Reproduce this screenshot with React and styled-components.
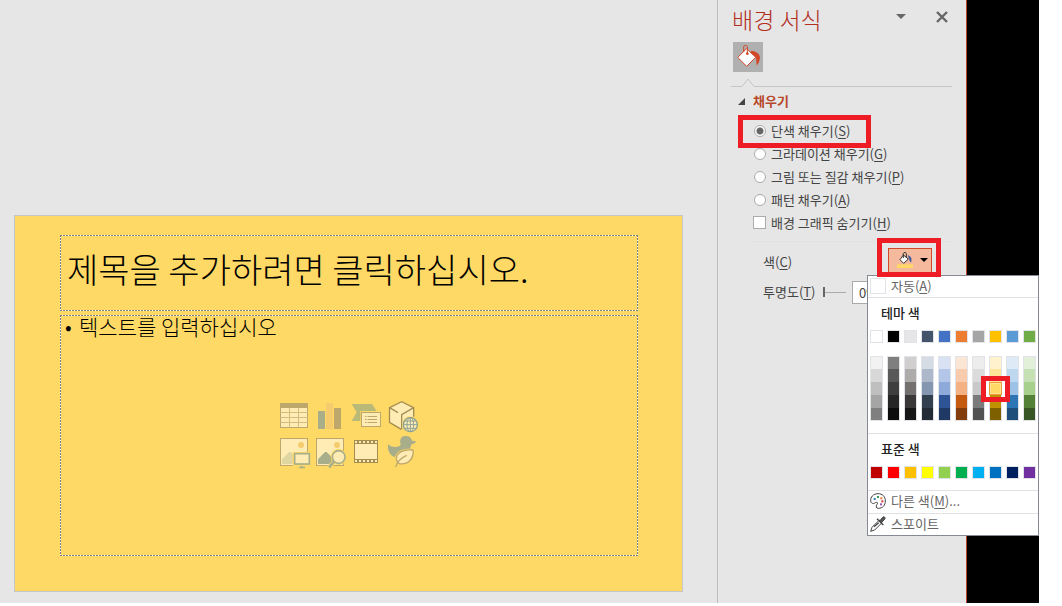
import { useState } from 'react'
import styled, { createGlobalStyle } from 'styled-components'

const themeColors = [
  { base: '#ffffff', shades: ['#f2f2f2', '#d8d8d8', '#bfbfbf', '#a5a5a5', '#7f7f7f'] },
  { base: '#000000', shades: ['#7f7f7f', '#595959', '#3f3f3f', '#262626', '#0c0c0c'] },
  { base: '#e7e6e6', shades: ['#d0cece', '#aeabab', '#757070', '#3a3838', '#171616'] },
  { base: '#44546a', shades: ['#d6dce4', '#adb9ca', '#8496b0', '#323f4f', '#222a35'] },
  { base: '#4472c4', shades: ['#d9e2f3', '#b4c6e7', '#8eaadb', '#2f5496', '#1f3864'] },
  { base: '#ed7d31', shades: ['#fbe5d5', '#f7cbac', '#f4b183', '#c55a11', '#833c0b'] },
  { base: '#a5a5a5', shades: ['#ededed', '#dbdbdb', '#c9c9c9', '#7b7b7b', '#525252'] },
  { base: '#ffc000', shades: ['#fff2cc', '#fee599', '#ffd965', '#bf9000', '#7f6000'] },
  { base: '#5b9bd5', shades: ['#deebf6', '#bdd7ee', '#9cc3e5', '#2e75b5', '#1e4e79'] },
  { base: '#70ad47', shades: ['#e2efd9', '#c5e0b3', '#a8d08d', '#538135', '#375623'] },
]

const standardColors = [
  '#c00000', '#ff0000', '#ffc000', '#ffff00', '#92d050',
  '#00b050', '#00b0f0', '#0070c0', '#002060', '#7030a0',
]

const fillTypes = [
  { id: 'solid', label: '단색 채우기', hotkey: 'S' },
  { id: 'gradient', label: '그라데이션 채우기', hotkey: 'G' },
  { id: 'picture', label: '그림 또는 질감 채우기', hotkey: 'P' },
  { id: 'pattern', label: '패턴 채우기', hotkey: 'A' },
]

function Hotkey({ letter }) {
  return <>(<u>{letter}</u>)</>
}

/* ---------- placeholder icons ---------- */

function TableIcon() {
  return (
    <PlaceholderSvg viewBox="0 0 108 108">
      <rect x="7.5" y="10.5" width="81" height="72" fill="#ffecb5" stroke="#bda76b" strokeWidth="3" />
      <rect x="6" y="9" width="84" height="15" fill="#bda76b" />
      <path d="M7 37.500H89M7 52.500H89M7 67.500H89M34.500 24V82M61.500 24V82" stroke="#d3bd7c" strokeWidth="3" fill="none" />
    </PlaceholderSvg>
  )
}

function ChartIcon() {
  return (
    <PlaceholderSvg viewBox="0 0 108 108">
      <rect x="12" y="33" width="21" height="54" fill="#a8ae8a" />
      <rect x="36" y="9" width="21" height="78" fill="#f5cc6d" />
      <rect x="60" y="24" width="21" height="63" fill="#bda76b" />
    </PlaceholderSvg>
  )
}

function SmartArtIcon() {
  return (
    <PlaceholderSvg viewBox="0 0 108 108">
      <path d="M5 12H66L82 37L66 63H5L20 37Z" fill="#b9b978" />
      <rect x="31" y="33" width="60" height="51" fill="#fed966" />
      <rect x="34.500" y="37.500" width="57" height="42" fill="#ffecb5" stroke="#bda76b" strokeWidth="3" />
      <path d="M45 49.500H50M53 49.500H81M45 58.500H50M53 58.500H81M45 67.500H50M53 67.500H81" stroke="#bda76b" strokeWidth="3" />
    </PlaceholderSvg>
  )
}

function ModelIcon() {
  return (
    <PlaceholderSvg viewBox="0 0 108 108">
      <path d="M10.500 23L47 5L83 23V66L46 88L10.500 67Z" fill="#ffecb5" />
      <path d="M46 88L10.500 67V23L47 5L83 23V50M10.500 23L36 38M83 23L47 44V88" fill="none" stroke="#a48d50" strokeWidth="4" />
      <circle cx="73" cy="74" r="25" fill="#fed966" />
      <circle cx="73" cy="74" r="21" fill="#ffecb5" stroke="#8fa393" strokeWidth="4" />
      <path d="M73 53V95M52 74H94M56 63H90M56 85H90" stroke="#8fa393" strokeWidth="3" />
      <ellipse cx="73" cy="74" rx="10" ry="21" fill="none" stroke="#8fa393" strokeWidth="3" />
    </PlaceholderSvg>
  )
}

function PictureIcon() {
  return (
    <PlaceholderSvg viewBox="0 0 108 108">
      <rect x="7.500" y="7.500" width="81" height="81" fill="#ffecb5" stroke="#bda76b" strokeWidth="3" />
      <circle cx="69" cy="27" r="9" fill="#f5cc6d" />
      <path d="M12 84V70L33 48H38L60 70V84Z" fill="#dfd6a2" />
      <path d="M44 48H99V90H83V97H56V90H44Z" fill="#fed966" />
      <rect x="50" y="53" width="44" height="31" fill="#ffecb5" stroke="#a8ae8a" strokeWidth="5" />
      <path d="M72 89V96M63 94.500H81" stroke="#a8ae8a" strokeWidth="4" />
    </PlaceholderSvg>
  )
}

function OnlinePictureIcon() {
  return (
    <PlaceholderSvg viewBox="0 0 108 108">
      <rect x="7.500" y="7.500" width="81" height="81" fill="#ffecb5" stroke="#bda76b" strokeWidth="3" />
      <circle cx="69" cy="27" r="9" fill="#f5cc6d" />
      <path d="M12 84V70L33 48H38L60 70V84Z" fill="#a8ae8a" />
      <circle cx="74" cy="63" r="24" fill="#fed966" />
      <path d="M60 78L45 94" stroke="#fed966" strokeWidth="13" />
      <path d="M60 77L45 94" stroke="#a8ae8a" strokeWidth="8" />
      <circle cx="74" cy="63" r="19" fill="#ffecb5" stroke="#a8ae8a" strokeWidth="5" />
    </PlaceholderSvg>
  )
}

function VideoIcon() {
  return (
    <PlaceholderSvg viewBox="0 0 108 108">
      <rect x="12" y="12" width="72" height="69" fill="#a48d50" />
      <rect x="15" y="24" width="66" height="45" fill="#ffecb5" />
      <path d="M15 18H81M15 75H81" stroke="#ffecb5" strokeWidth="6" strokeDasharray="6 6" />
    </PlaceholderSvg>
  )
}

function StockIcon() {
  return (
    <PlaceholderSvg viewBox="0 0 108 108">
      <path d="M6 24C13 33 27 35 39 31C47 28 43 23 42 16C43 4 50 -1 61 0C70 0 76 6 78 14L90 16C88 23 82 25 76 25C76 31 72 34 73 40C70 56 48 66 29 64C13 61 4 46 6 24Z" fill="#a8ae8a" />
      <path d="M84 39C58 36 33 42 27 62C26 70 28 77 34 83L24 94L34 95L41 87C72 91 89 69 84 39Z" fill="#fed966" />
      <path d="M81 42C58 40 37 46 32 61C30 71 33 79 40 83C66 87 85 67 81 42Z" fill="#ffecb5" stroke="#bda76b" strokeWidth="4" />
      <path d="M29 93C33 79 44 66 62 58" fill="none" stroke="#bda76b" strokeWidth="4" />
    </PlaceholderSvg>
  )
}

const contentButtons = [
  { label: '표 삽입', Icon: TableIcon },
  { label: '차트 삽입', Icon: ChartIcon },
  { label: 'SmartArt 그래픽 삽입', Icon: SmartArtIcon },
  { label: '3D 모델', Icon: ModelIcon },
  { label: '그림', Icon: PictureIcon },
  { label: '온라인 그림', Icon: OnlinePictureIcon },
  { label: '비디오 삽입', Icon: VideoIcon },
  { label: '아이콘 삽입', Icon: StockIcon },
]

/* ---------- pane icons ---------- */

function FillTabIcon() {
  return (
    <svg width="30" height="30" viewBox="0 0 90 90">
      <path d="M54 26C70 27 81 36 81 47C80 56 76 65 71 71L69 46L54 33Z" fill="#d24726" />
      <path d="M41 20L68 46L41 73L14 46Z" fill="#fff" stroke="#d24726" strokeWidth="3" />
      <path d="M32 28V14C32 9 43 9 43 14V34" fill="none" stroke="#d24726" strokeWidth="3" />
      <circle cx="43" cy="35" r="4" fill="#d24726" />
    </svg>
  )
}

function BucketIcon() {
  return (
    <svg width="16" height="16" viewBox="0 0 48 48">
      <path d="M32 10C43 12 46 21 42 32C37 29 36 20 32 10Z" fill="#44619d" />
      <path d="M19 9L34 21L20 34L9 23Z" fill="#fff" stroke="#333" strokeWidth="3" />
      <path d="M19 18V4C21 0 27 0 28 5V15" fill="none" stroke="#333" strokeWidth="3" />
      <rect x="0" y="37" width="48" height="11" fill="#ffd965" />
    </svg>
  )
}

function PaletteIcon() {
  return (
    <svg width="16" height="16" viewBox="0 0 48 48">
      <path d="M24 2C10 2 1 12 2 24C3 31 10 34 16 29C21 26 25 29 21 34C17 40 18 46 25 46C38 46 46 37 46 24C46 10 37 2 24 2Z" fill="#fff" stroke="#444" strokeWidth="3" />
      <rect x="11" y="15" width="6" height="6" fill="#3b7fc4" />
      <rect x="21" y="9" width="6" height="6" fill="#3a9a5b" />
      <rect x="31" y="13" width="6" height="6" fill="#e8762c" />
      <rect x="34" y="22" width="6" height="6" fill="#d13438" />
      <rect x="30" y="31" width="6" height="6" fill="#a04fb0" />
    </svg>
  )
}

function EyedropperIcon() {
  return (
    <svg width="16" height="16" viewBox="0 0 48 48">
      <path d="M2 46L6 34L28 12L36 20L14 42Z" fill="#fff" stroke="#444" strokeWidth="3" />
      <path d="M29 15L38 4C42 0 48 5 44 10L34 20Z" fill="#555" stroke="#444" strokeWidth="3" />
      <path d="M21 8L40 27M12 32L26 20" stroke="#444" strokeWidth="4" />
    </svg>
  )
}

function ColorMenu({ color, onPick }) {
  return (
    <Menu>
      <MenuItem>
        <AutoSwatch />
        <span>자동<Hotkey letter="A" /></span>
      </MenuItem>
      <MenuGroup>
        <MenuTitle>테마 색</MenuTitle>
        <SwatchRow>
          {themeColors.map(({ base }) => (
            <Swatch key={base} $color={base} aria-label={base} onClick={() => onPick(base)} />
          ))}
        </SwatchRow>
        <ShadeRow>
          {themeColors.map(({ base, shades }) => (
            <ShadeColumn key={base}>
              {shades.map((shade) => (
                <Shade
                  key={shade}
                  $color={shade}
                  $selected={shade === color}
                  aria-label={shade}
                  onClick={() => onPick(shade)}
                >
                  {shade === '#ffd965' && <SwatchMark />}
                </Shade>
              ))}
            </ShadeColumn>
          ))}
        </ShadeRow>
      </MenuGroup>
      <MenuGroup>
        <MenuTitle>표준 색</MenuTitle>
        <SwatchRow>
          {standardColors.map((c) => (
            <Swatch key={c} $color={c} aria-label={c} onClick={() => onPick(c)} />
          ))}
        </SwatchRow>
      </MenuGroup>
      <MenuItem $line>
        <PaletteIcon />
        <span>다른 색<Hotkey letter="M" />...</span>
      </MenuItem>
      <MenuItem $line>
        <EyedropperIcon />
        <span>스포이트</span>
      </MenuItem>
    </Menu>
  )
}

function FormatPane({ color, onPick }) {
  const [fill, setFill] = useState('solid')
  const [hideGraphics, setHideGraphics] = useState(false)
  const [transparency, setTransparency] = useState(0)

  return (
    <Pane>
      <PaneHeader>
        <h2>배경 서식</h2>
        <HeaderButton aria-label="작업창 옵션">
          <svg width="10" height="6" viewBox="0 0 10 6"><path d="M0 0H10L5 5Z" fill="#666" /></svg>
        </HeaderButton>
        <HeaderButton aria-label="닫기">
          <svg width="12" height="12" viewBox="0 0 12 12"><path d="M1 1L11 11M11 1L1 11" stroke="#666" strokeWidth="2.400" /></svg>
        </HeaderButton>
      </PaneHeader>

      <FillTab aria-label="채우기"><FillTabIcon /></FillTab>
      <TabLine>
        <svg width="14" height="9" viewBox="0 0 14 9"><path d="M0 8.500H1L7 1L13 8.500H14" fill="none" stroke="#c6c6c6" /></svg>
      </TabLine>

      <SectionTitle>
        <svg width="7" height="7" viewBox="0 0 7 7"><path d="M7 0V7H0Z" fill="#444" /></svg>
        채우기
      </SectionTitle>

      <Options>
        {fillTypes.map(({ id, label, hotkey }) => (
          <Option key={id}>
            <Radio name="fill" checked={fill === id} onChange={() => setFill(id)} />
            <span>{label}<Hotkey letter={hotkey} /></span>
            {id === 'solid' && <OptionMark />}
          </Option>
        ))}
        <Option>
          <Checkbox checked={hideGraphics} onChange={(e) => setHideGraphics(e.target.checked)} />
          <span>배경 그래픽 숨기기<Hotkey letter="H" /></span>
        </Option>
      </Options>

      <Settings>
        <SettingRow>
          <SettingLabel id="color-label">색<Hotkey letter="C" /></SettingLabel>
          <ColorPicker>
            <ColorButton aria-labelledby="color-label">
              <BucketIcon />
              <svg width="8" height="4" viewBox="0 0 8 4"><path d="M0 0H8L4 4Z" fill="#000" /></svg>
            </ColorButton>
            <ColorMenu color={color} onPick={onPick} />
            <ButtonMark />
          </ColorPicker>
        </SettingRow>
        <SettingRow>
          <SettingLabel as="label" htmlFor="transparency">투명도<Hotkey letter="T" /></SettingLabel>
          <Slider id="transparency" value={transparency} onChange={(e) => setTransparency(e.target.value)} />
          <Spin aria-label="투명도 값" value={`${transparency}%`} readOnly />
        </SettingRow>
      </Settings>
    </Pane>
  )
}

function App() {
  const [color, setColor] = useState('#ffd965')

  return (
    <>
      <GlobalStyle />
      <Screen>
        <Workspace>
          <Slide $color={color}>
            <TitleBox><h1>제목을 추가하려면 클릭하십시오.</h1></TitleBox>
            <ContentBox>
              <ul><li>텍스트를 입력하십시오</li></ul>
              <ContentGrid>
                {contentButtons.map(({ label, Icon }) => (
                  <ContentButton key={label} aria-label={label}><Icon /></ContentButton>
                ))}
              </ContentGrid>
            </ContentBox>
          </Slide>
        </Workspace>
        <FormatPane color={color} onPick={setColor} />
        <Desktop />
      </Screen>
    </>
  )
}
export default App

const GlobalStyle = createGlobalStyle`
  * {
    box-sizing: border-box;
  }
  body {
    margin: 0;
    background: #fff;
    color: #444;
    font: 13px/20px "Noto Sans CJK KR", sans-serif;
  }
  h1, h2, h3, ul {
    margin: 0;
    padding: 0;
    font-weight: 400;
  }
  button {
    padding: 0;
    border: 0;
    background: none;
    color: inherit;
    font: inherit;
  }
  input {
    margin: 0;
    font: inherit;
    color: inherit;
  }
  svg {
    display: block;
    flex: none;
  }
  u {
    text-underline-offset: 2px;
  }
`

const Screen = styled.div`
  display: flex;
  min-height: calc(100vh - 3px);
  margin: 0 23px 3px 0;
  background: #e6e6e6;
`

const Workspace = styled.main`
  flex: 1;
  min-width: 0;
  padding: 215px 34px 11px 14px;
`

const Slide = styled.section`
  display: flex;
  flex-direction: column;
  gap: 4px;
  aspect-ratio: 669 / 377;
  padding: 19px 44px 35px 45px;
  border: 1px solid #c6c6c6;
  background: ${(p) => p.$color};
`

/* two grey pixels, one white, all the way round */
const Placeholder = styled.div`
  background:
    repeating-linear-gradient(90deg, #7f7f7f 0 2px, #fff 2px 3px) top / 100% 1px no-repeat,
    repeating-linear-gradient(90deg, #7f7f7f 0 2px, #fff 2px 3px) bottom / 100% 1px no-repeat,
    repeating-linear-gradient(#7f7f7f 0 2px, #fff 2px 3px) left / 1px 100% no-repeat,
    repeating-linear-gradient(#7f7f7f 0 2px, #fff 2px 3px) right / 1px 100% no-repeat;
  color: #000;
`

const TitleBox = styled(Placeholder)`
  padding: 12px 7px 20px;
  h1 {
    font-size: 34px;
    line-height: 44px;
    font-weight: 300;
  }
`

const ContentBox = styled(Placeholder)`
  flex: 1;
  display: grid;
  grid-template-rows: 1fr auto 1fr;
  justify-items: center;
  padding-left: 2px;
  ul {
    justify-self: start;
    padding-left: 17px;
    font-size: 21px;
    line-height: 22px;
    font-weight: 300;
    list-style: none;
  }
  li::before {
    content: '•';
    display: inline-block;
    width: 14px;
    margin-left: -14px;
  }
`

const ContentGrid = styled.div`
  display: grid;
  grid-template-columns: repeat(4, 36px);
`

const ContentButton = styled.button`
  height: 36px;
`

const PlaceholderSvg = styled.svg`
  width: 36px;
  height: 36px;
  overflow: visible;
`

const Desktop = styled.div`
  width: 72px;
  background: #000;
`

const Pane = styled.aside`
  width: 250px;
  padding: 0 14px 0 13px;
  border-left: 1px solid #bdbdbd;
  border-right: 1px solid #b7472a;
`

const PaneHeader = styled.header`
  display: flex;
  align-items: center;
  padding: 3px 2px 7px 1px;
  h2 {
    flex: 1;
    color: #b22f1e;
    font-size: 23px;
    line-height: 32px;
    font-weight: 300;
  }
`

const HeaderButton = styled.button`
  display: grid;
  place-items: center;
  width: 16px;
  height: 16px;
  margin: -4px 0 0 25px;
`

const FillTab = styled.button`
  display: block;
  margin-left: 2px;
  background: #b0b0b0;
`

const TabLine = styled.div`
  height: 15px;
  padding: 6px 0 0 10px;
  background: linear-gradient(#c6c6c6, #c6c6c6) bottom / 100% 1px no-repeat;
  svg {
    background: #e6e6e6;
  }
`

const SectionTitle = styled.h3`
  display: flex;
  align-items: center;
  gap: 8px;
  padding: 4px 0 0 7px;
  color: #b7472a;
  font-size: 13px;
  line-height: 20px;
  && {
    font-weight: 700;
  }
`

const Options = styled.div`
  display: grid;
  grid-auto-rows: 23px;
  margin: 8px 0 0 22px;
  padding-bottom: 7px;
  border-bottom: 1px solid #e1e1e1;
`

const Option = styled.label`
  position: relative;
  display: flex;
  align-items: center;
  gap: 5px;
`

const Radio = styled.input.attrs({ type: 'radio' })`
  appearance: none;
  width: 12px;
  height: 12px;
  margin-left: 1px;
  border: 1px solid #ababab;
  border-radius: 50%;
  background: #fff;
  &:checked {
    background: radial-gradient(circle, #666 0 3px, #fff 4px);
  }
`

const Checkbox = styled.input.attrs({ type: 'checkbox' })`
  appearance: none;
  width: 13px;
  height: 13px;
  border: 1px solid #ababab;
  background: #fff;
  &:checked {
    background: #666;
  }
`

const Settings = styled.div`
  padding: 5px 0 0 32px;
`

const SettingRow = styled.div`
  display: flex;
  align-items: center;
  height: 30px;
`

const SettingLabel = styled.span`
  width: 60px;
  white-space: nowrap;
`

const ColorPicker = styled.div`
  position: relative;
  z-index: 1;
  margin-left: 65px;
`

const ColorButton = styled.button`
  display: flex;
  align-items: center;
  gap: 7px;
  width: 44px;
  height: 28px;
  padding: 0 0 4px 8px;
  border: 1px solid #d24726;
  background: #f5ba9d;
`

const Slider = styled.input.attrs({ type: 'range' })`
  appearance: none;
  width: 23px;
  height: 10px;
  background: linear-gradient(#ababab, #ababab) center / 100% 1px no-repeat;
  &::-webkit-slider-thumb {
    appearance: none;
    width: 2px;
    height: 10px;
    background: #666;
  }
`

const Spin = styled.input`
  width: 50px;
  height: 23px;
  margin-left: 6px;
  padding: 0 6px;
  border: 1px solid #ababab;
  background: #fff;
`

const Menu = styled.div`
  position: absolute;
  top: 27px;
  left: -21px;
  width: 172px;
  border: 1px solid #868a93;
  background: #fff;
`

const MenuItem = styled.button`
  display: flex;
  align-items: center;
  gap: 5px;
  width: 100%;
  height: ${(p) => (p.$line ? '23px' : '21px')};
  padding: 0 0 2px 2px;
  border-top: ${(p) => (p.$line ? '1px solid #e1e1e1' : '0')};
  color: #666;
  &:last-child {
    height: 22px;
  }
`

const AutoSwatch = styled.span`
  width: 16px;
  height: 16px;
  border: 1px solid #e2e3e8;
  background: #fff;
`

const MenuGroup = styled.div`
  padding: 5px 2px 11px;
  border-top: 1px solid #e1e1e1;
`

const MenuTitle = styled.h3`
  padding: 0 0 7px 11px;
  color: #222;
  font-size: 13px;
  line-height: 20px;
  && {
    font-weight: 500;
  }
`

const SwatchRow = styled.div`
  display: flex;
  gap: 4px;
`

const Swatch = styled.button`
  width: 13px;
  height: 13px;
  border: 1px solid #e2e3e8;
  background: ${(p) => p.$color};
`

const ShadeRow = styled(SwatchRow)`
  margin: 13px 0 12px;
  & {
    margin-bottom: 1px;
  }
`

const ShadeColumn = styled.div`
  display: grid;
  grid-template-rows: repeat(5, 13px);
  width: 13px;
`

const Shade = styled.button`
  position: relative;
  border: solid #e2e3e8;
  border-width: 0 1px;
  background: ${(p) => p.$color};
  &:first-child {
    border-top-width: 1px;
  }
  &:last-child {
    border-bottom-width: 1px;
  }
  ${(p) => p.$selected && `
    && {
      border: 1px solid #ee9a3a;
      box-shadow: inset 0 0 0 1px #ffe294;
    }
  `}
`

const Mark = styled.span`
  position: absolute;
  z-index: 1;
  border: 5px solid #ee1c25;
  pointer-events: none;
`

const OptionMark = styled(Mark)`
  inset: -4px 81px -6px -15px;
`

const ButtonMark = styled(Mark)`
  inset: -10px -9px -1px -11px;
`

const SwatchMark = styled(Mark)`
  inset: -7px -9px -8px;
`
